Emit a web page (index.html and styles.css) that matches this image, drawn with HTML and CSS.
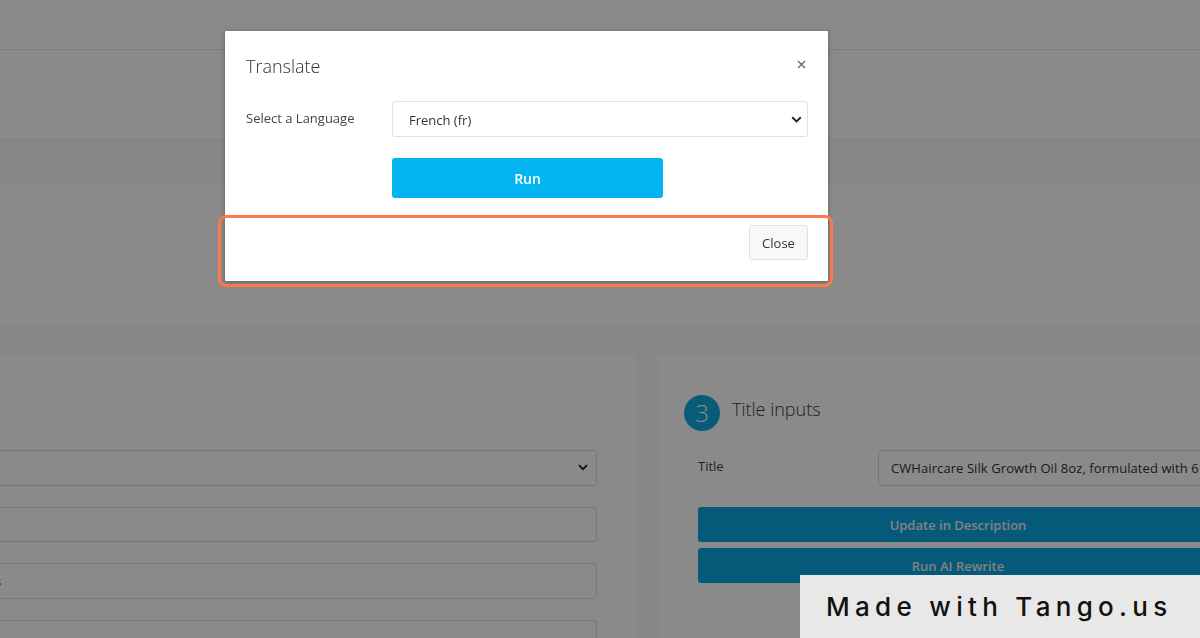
FILE: index.html
```html
<!DOCTYPE html>
<html lang="en">
<head>
<meta charset="utf-8">
<title>Translate</title>
<link rel="stylesheet" href="styles.css">
</head>
<body>
<div class="page">
  <header class="topbar"></header>
  <div class="subheader"></div>
  <div class="tabs"></div>
  <section class="summary"></section>
  <div class="spacer"></div>
  <div class="panels">
    <div class="panel panel-left">
      <div class="field select-like"><span></span>
        <svg class="chev" width="10" height="7" viewBox="0 0 10 7"><path d="M1 1.2 L5 5.2 L9 1.2" fill="none" stroke="#222" stroke-width="1.8"/></svg>
      </div>
      <div class="field"></div>
      <div class="field"><span class="cut">s</span></div>
      <div class="field"></div>
    </div>
    <div class="panel panel-right">
      <div class="step-head">
        <span class="step-num">3</span>
        <h3 class="step-title">Title inputs</h3>
      </div>
      <div class="title-row">
        <label class="row-label">Title</label>
        <div class="field title-input">CWHaircare Silk Growth Oil 8oz, formulated with 6</div>
      </div>
      <button class="wide-btn">Update in Description</button>
      <button class="wide-btn">Run AI Rewrite</button>
    </div>
  </div>
</div>

<div class="backdrop"></div>

<div class="modal">
  <div class="modal-header">
    <h4 class="modal-title">Translate</h4>
    <span class="modal-close">
      <svg width="9" height="9" viewBox="0 0 9 9"><path d="M1 1 L8 8 M8 1 L1 8" stroke="#666" stroke-width="1.3" fill="none"/></svg>
    </span>
  </div>
  <div class="modal-body">
    <div class="lang-row">
      <label class="lang-label">Select a Language</label>
      <div class="lang-select">
        <span>French (fr)</span>
        <svg width="11" height="7" viewBox="0 0 11 7"><path d="M1.2 1.2 L5.5 5.4 L9.8 1.2" fill="none" stroke="#222" stroke-width="1.9"/></svg>
      </div>
    </div>
    <div class="run-row">
      <button class="run-btn">Run</button>
    </div>
  </div>
  <div class="modal-footer">
    <button class="close-btn">Close</button>
  </div>
</div>

<div class="highlight"></div>

<div class="tango">Made with Tango.us</div>
</body>
</html>
```

FILE: styles.css
```css
* { box-sizing: border-box; }

html, body {
  margin: 0;
  padding: 0;
  width: 1200px;
  height: 638px;
  overflow: hidden;
  font-family: "Open Sans", "Noto Sans", sans-serif;
  background: #ffffff;
}

.page {
  width: 1200px;
}

.topbar {
  height: 50px;
  background: #ffffff;
  border-bottom: 1px solid #e8e8e8;
}

.subheader {
  height: 89px;
  background: #ffffff;
}

.tabs {
  height: 45px;
  background: #f9f9f9;
  border-top: 1px solid #f0f0f0;
}

.summary {
  height: 140px;
  background: #ffffff;
}

.spacer {
  height: 31px;
  background: #f9f9f9;
}

.panels {
  display: grid;
  grid-template-columns: 636px 542px;
  column-gap: 22px;
  background: #f9f9f9;
  height: 300px;
}

.panel {
  background: #ffffff;
  border-radius: 3px;
}

.panel-left {
  padding: 95px 39px 0 0;
  display: flex;
  flex-direction: column;
  gap: 21px;
  overflow: hidden;
}

.panel-left .field {
  margin-left: -10px;
}

.field {
  height: 36px;
  border: 1px solid #dcdcdc;
  border-radius: 3px;
  background: #ffffff;
  font-size: 13px;
  color: #333;
  display: flex;
  align-items: center;
}

.select-like {
  justify-content: space-between;
  padding-right: 8px;
}

.cut {
  margin-left: 4px;
  font-size: 13px;
}

.chev { display: block; }

.panel-right {
  padding: 40px 0 0 26px;
  overflow: hidden;
}

.step-head {
  display: flex;
  align-items: center;
  gap: 12px;
}

.step-num {
  width: 36px;
  height: 36px;
  border-radius: 50%;
  background: #10a8e0;
  color: #ffffff;
  font-size: 24px;
  font-weight: 300;
  display: flex;
  align-items: center;
  justify-content: center;
  line-height: 1;
}

.step-title {
  margin: 0 0 8px;
  font-size: 18px;
  font-weight: 300;
  color: #3a3a3a;
}

.title-row {
  display: flex;
  align-items: flex-start;
  margin: 19px 0 21px 14px;
}

.row-label {
  width: 180px;
  font-size: 13px;
  color: #444;
  padding-top: 7px;
}

.title-input {
  flex: 1;
  padding-left: 12px;
  white-space: nowrap;
  overflow: hidden;
  letter-spacing: 0.08px;
  margin-right: -40px;
}

.wide-btn {
  display: block;
  width: 520px;
  height: 35px;
  margin: 0 0 6px 14px;
  border: none;
  border-radius: 3px;
  background: #0ca6df;
  color: #f0f0f0;
  font-family: "Open Sans", sans-serif;
  font-size: 13px;
  font-weight: 600;
}

.backdrop {
  position: fixed;
  inset: 0;
  background: rgba(0, 0, 0, 0.46);
}

.modal {
  position: absolute;
  left: 225px;
  top: 31px;
  width: 603px;
  height: 250px;
  background: #ffffff;
  border-radius: 1px;
  box-shadow: 0 1px 4px rgba(0, 0, 0, 0.35);
}

.modal-header {
  display: flex;
  justify-content: space-between;
  align-items: flex-start;
  padding: 20px 21px 0 21px;
  height: 50px;
}

.modal-title {
  margin: 0;
  font-size: 18px;
  font-weight: 300;
  line-height: 30px;
  color: #333;
}

.modal-close {
  display: flex;
  margin-top: 9px;
  margin-right: 1px;
}

.modal-body {
  padding: 20px 20px 0 21px;
}

.lang-row {
  display: flex;
  align-items: center;
}

.lang-label {
  width: 146px;
  font-size: 13px;
  color: #444;
  padding-bottom: 2px;
}

.lang-select {
  flex: 1;
  height: 36px;
  border: 1px solid #e2e2e2;
  border-radius: 3px;
  display: flex;
  align-items: center;
  justify-content: space-between;
  padding: 0 5px 0 16px;
  font-size: 13px;
  color: #333;
}

.lang-select span { padding-top: 1px; }

.run-row {
  padding: 21px 0 0 146px;
}

.run-btn {
  width: 271px;
  height: 40px;
  border: none;
  border-radius: 3px;
  background: #02b5f1;
  color: #ffffff;
  font-family: "Open Sans", sans-serif;
  font-size: 14px;
  font-weight: 600;
}

.modal-footer {
  display: flex;
  justify-content: flex-end;
  padding: 27px 20px 0 20px;
}

.close-btn {
  width: 59px;
  height: 35px;
  border: 1px solid #e0e0e0;
  border-radius: 3px;
  background: #f8f8f8;
  color: #333;
  font-family: "Open Sans", sans-serif;
  font-size: 13px;
}

.highlight {
  position: absolute;
  left: 218px;
  top: 215px;
  width: 615px;
  height: 72px;
  border: 3px solid #f97a48;
  border-radius: 8px;
}

.tango {
  position: fixed;
  left: 800px;
  top: 575px;
  width: 400px;
  height: 63px;
  background: #e8e8e8;
  display: flex;
  align-items: center;
  padding-left: 26px;
  font-family: "Inter", "Noto Sans", sans-serif;
  font-size: 26px;
  font-weight: 500;
  letter-spacing: 5.3px;
  color: #111;
}
```
